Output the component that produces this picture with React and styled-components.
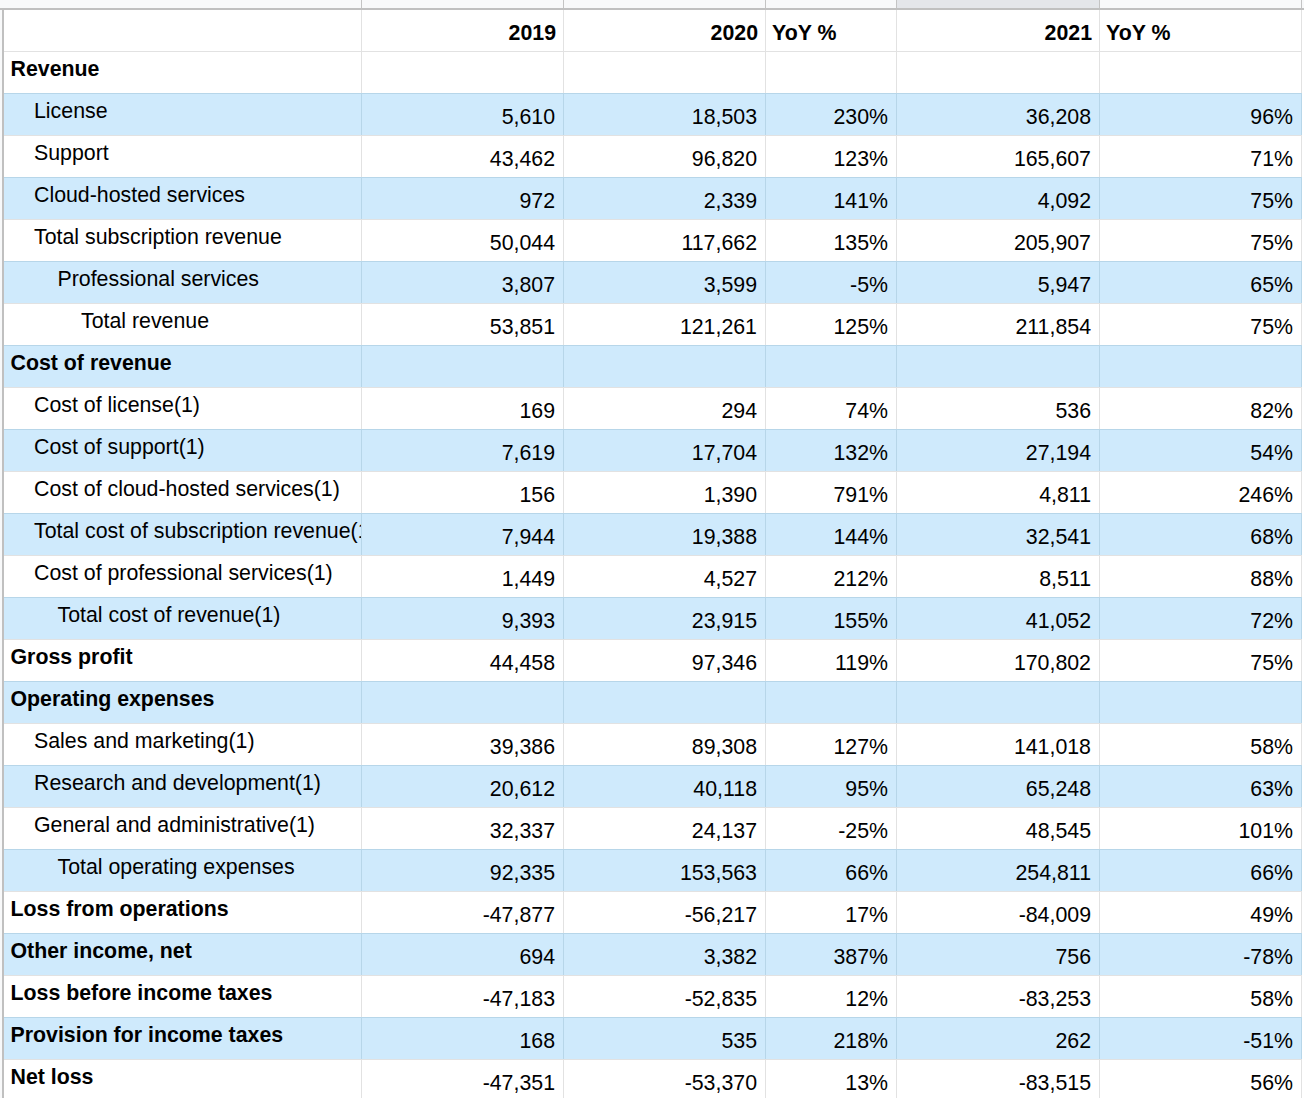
import React from "react";
import styled, { createGlobalStyle, css } from "styled-components";

const GlobalStyle = createGlobalStyle`
  html, body { margin: 0; padding: 0; background: #ffffff; }
  body { font-family: "Liberation Sans", Arial, sans-serif; }
`;

const COLS = "358px 202px 202px 131px 203px 202px";

const Sheet = styled.div`
  width: 1304px;
  height: 1098px;
  overflow: hidden;
  background: #ffffff;
`;

const ColHeaderStrip = styled.div`
  display: grid;
  grid-template-columns: 4px ${COLS};
  height: 8px;
  background: #f8f9fa;
  border-bottom: 2px solid #c0c0c0;
`;

const ColHeaderCell = styled.div`
  background: ${(p) => (p.$active ? "#e4e6ea" : "#f8f9fa")};
  border-right: 1px solid #c4c4c4;
  &:first-child { border-right: none; }
`;

const Body = styled.div`
  display: flex;
`;

const RowHeaderStrip = styled.div`
  width: 2px;
  background: #f8f9fa;
  border-right: 2px solid #c0c0c0;
  flex-shrink: 0;
`;

const Table = styled.div`
  display: flex;
  flex-direction: column;
`;

const Row = styled.div`
  display: grid;
  grid-template-columns: ${COLS};
  height: 42px;
  box-sizing: border-box;
  border-top: 1px solid ${(p) => (p.$blue ? "#b7d6e9" : "#e2e2e2")};
  background: ${(p) => (p.$blue ? "#cfeafc" : "#ffffff")};
  ${(p) =>
    p.$first &&
    css`
      height: 41px;
      border-top: none;
    `}
`;

const Cell = styled.div`
  box-sizing: border-box;
  border-right: 1px solid ${(p) => (p.$blue ? "#b7d6e9" : "#e2e2e2")};
  font-size: 21.33px;
  line-height: 24px;
  color: #000000;
  white-space: nowrap;
  overflow: hidden;
  font-weight: ${(p) => (p.$bold ? 700 : 400)};
`;

const LabelCell = styled(Cell)`
  padding-top: 5px;
  padding-left: ${(p) => 6.5 + p.$level * 23.5}px;
`;

const NumCell = styled(Cell)`
  padding-top: 11px;
  padding-right: 8px;
  text-align: right;
`;

const HeadCell = styled(Cell)`
  padding-top: 11px;
  font-weight: 700;
  text-align: ${(p) => (p.$left ? "left" : "right")};
  padding-left: ${(p) => (p.$left ? "6px" : "0")};
  padding-right: ${(p) => (p.$left ? "0" : "7px")};
`;

const rows = [
  { label: "Revenue", bold: true, level: 0, v: [] },
  { label: "License", level: 1, v: ["5,610", "18,503", "230%", "36,208", "96%"] },
  { label: "Support", level: 1, v: ["43,462", "96,820", "123%", "165,607", "71%"] },
  { label: "Cloud-hosted services", level: 1, v: ["972", "2,339", "141%", "4,092", "75%"] },
  { label: "Total subscription revenue", level: 1, v: ["50,044", "117,662", "135%", "205,907", "75%"] },
  { label: "Professional services", level: 2, v: ["3,807", "3,599", "-5%", "5,947", "65%"] },
  { label: "Total revenue", level: 3, v: ["53,851", "121,261", "125%", "211,854", "75%"] },
  { label: "Cost of revenue", bold: true, level: 0, v: [] },
  { label: "Cost of license(1)", level: 1, v: ["169", "294", "74%", "536", "82%"] },
  { label: "Cost of support(1)", level: 1, v: ["7,619", "17,704", "132%", "27,194", "54%"] },
  { label: "Cost of cloud-hosted services(1)", level: 1, v: ["156", "1,390", "791%", "4,811", "246%"] },
  { label: "Total cost of subscription revenue(1)", level: 1, v: ["7,944", "19,388", "144%", "32,541", "68%"] },
  { label: "Cost of professional services(1)", level: 1, v: ["1,449", "4,527", "212%", "8,511", "88%"] },
  { label: "Total cost of revenue(1)", level: 2, v: ["9,393", "23,915", "155%", "41,052", "72%"] },
  { label: "Gross profit", bold: true, level: 0, v: ["44,458", "97,346", "119%", "170,802", "75%"] },
  { label: "Operating expenses", bold: true, level: 0, v: [] },
  { label: "Sales and marketing(1)", level: 1, v: ["39,386", "89,308", "127%", "141,018", "58%"] },
  { label: "Research and development(1)", level: 1, v: ["20,612", "40,118", "95%", "65,248", "63%"] },
  { label: "General and administrative(1)", level: 1, v: ["32,337", "24,137", "-25%", "48,545", "101%"] },
  { label: "Total operating expenses", level: 2, v: ["92,335", "153,563", "66%", "254,811", "66%"] },
  { label: "Loss from operations", bold: true, level: 0, v: ["-47,877", "-56,217", "17%", "-84,009", "49%"] },
  { label: "Other income, net", bold: true, level: 0, v: ["694", "3,382", "387%", "756", "-78%"] },
  { label: "Loss before income taxes", bold: true, level: 0, v: ["-47,183", "-52,835", "12%", "-83,253", "58%"] },
  { label: "Provision for income taxes", bold: true, level: 0, v: ["168", "535", "218%", "262", "-51%"] },
  { label: "Net loss", bold: true, level: 0, v: ["-47,351", "-53,370", "13%", "-83,515", "56%"] },
];

export default function App() {
  return (
    <>
      <GlobalStyle />
      <Sheet>
        <ColHeaderStrip>
          <ColHeaderCell />
          <ColHeaderCell />
          <ColHeaderCell />
          <ColHeaderCell />
          <ColHeaderCell />
          <ColHeaderCell $active />
          <ColHeaderCell />
        </ColHeaderStrip>
        <Body>
          <RowHeaderStrip />
          <Table>
            <Row $first>
              <HeadCell />
              <HeadCell>2019</HeadCell>
              <HeadCell>2020</HeadCell>
              <HeadCell $left>YoY %</HeadCell>
              <HeadCell>2021</HeadCell>
              <HeadCell $left>YoY %</HeadCell>
            </Row>
            {rows.map((r, i) => {
              const blue = i % 2 === 1;
              return (
                <Row key={r.label} $blue={blue}>
                  <LabelCell $blue={blue} $bold={r.bold} $level={r.level}>
                    {r.label}
                  </LabelCell>
                  {[0, 1, 2, 3, 4].map((k) => (
                    <NumCell key={k} $blue={blue}>
                      {r.v[k] || ""}
                    </NumCell>
                  ))}
                </Row>
              );
            })}
          </Table>
        </Body>
      </Sheet>
    </>
  );
}
